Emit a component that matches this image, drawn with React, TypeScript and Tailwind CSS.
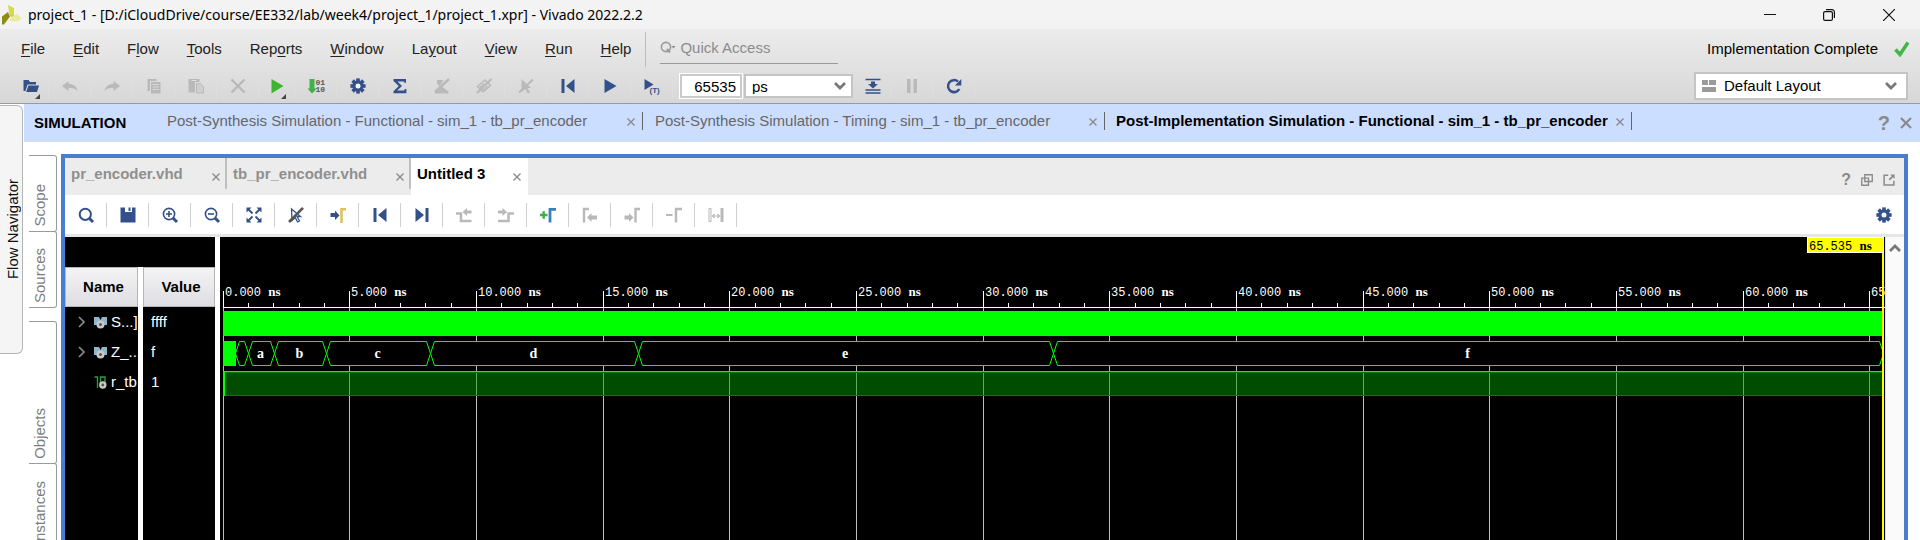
import React from "react";

const NAVY = "#33508a";
const GREY = "#b9b9b9";

type IconProps = { children: React.ReactNode; size?: "sm" | "md" };

function Icon({ children, size = "md" }: IconProps) {
  return (
    <svg
      viewBox="0 0 16 16"
      aria-hidden="true"
      className={size === "md" ? "h-4 w-4 shrink-0 overflow-visible" : "h-3 w-3 shrink-0 overflow-visible"}
    >
      {children}
    </svg>
  );
}

const Gear = () => (
  <Icon>
    {[0, 45, 90, 135].map((a) => (
      <rect key={a} x="6.2" y="0.4" width="3.6" height="15.2" fill={NAVY} transform={`rotate(${a} 8 8)`} />
    ))}
    <circle cx="8" cy="8" r="5.6" fill={NAVY} />
    <circle cx="8" cy="8" r="2.5" fill="#f4f4f4" />
  </Icon>
);

const Chevron = () => (
  <svg viewBox="0 0 14 10" aria-hidden="true" className="h-[10px] w-[14px]">
    <path d="M2 2l5 5 5-5" fill="none" stroke="#777" strokeWidth="2.8" />
  </svg>
);

const Cross = () => (
  <svg viewBox="0 0 8 8" aria-hidden="true" className="h-2 w-2">
    <path d="M.5.5l7 7M7.5.5l-7 7" stroke="#8a8a8a" strokeWidth="1.4" />
  </svg>
);

const Corner = () => (
  <svg viewBox="0 0 5 5" aria-hidden="true" className="absolute right-[8px] bottom-[-1px] h-[5px] w-[5px]">
    <path d="M5 0v5H0z" fill="#444" />
  </svg>
);

const toStart = (
  <Icon>
    <path d="M1.5 1h3v14h-3zM14.5 1v14L6 8z" fill={NAVY} />
  </Icon>
);

type Tool = { label: string; icon: React.ReactNode; narrow?: boolean; menu?: boolean };

const mainTools: Tool[] = [
  {
    label: "Open",
    narrow: true,
    menu: true,
    icon: (
      <Icon>
        <path d="M.5 2h5l1.5 2h6v2.4H4.6L2.4 13H.5z" fill={NAVY} />
        <path d="M5.4 7.6H16L14 14H3.2z" fill={NAVY} />
      </Icon>
    ),
  },
  {
    label: "Undo",
    icon: (
      <Icon>
        <path d="M0 8l6.5-5v3c5 0 8 2 9 7-2.500-2.600-5-3.200-9-3.200V13z" fill={GREY} />
      </Icon>
    ),
  },
  {
    label: "Redo",
    icon: (
      <Icon>
        <path d="M16 8L9.500 3v3C4.500 6 1.500 8 .5 13c2.500-2.600 5-3.200 9-3.200V13z" fill={GREY} />
      </Icon>
    ),
  },
  {
    label: "Copy",
    icon: (
      <Icon>
        <path d="M1.500 1h9v2H4v10H1.500z" fill={GREY} />
        <path d="M5 4h9.500v11.500H5z" fill={GREY} />
        <path d="M6.500 6.500h6.500M6.500 9h6.500M6.500 11.500h6.500" stroke="#d8d8d8" />
      </Icon>
    ),
  },
  {
    label: "Paste",
    icon: (
      <Icon>
        <path d="M.5 1h11v3H7v10.500H.5z" fill={GREY} />
        <path d="M3.500 2.500h5" stroke="#dedede" />
        <path d="M8.500 5.500h4l3 3v6.500h-7z" fill="#cfcfcf" stroke={GREY} />
      </Icon>
    ),
  },
  {
    label: "Delete",
    icon: (
      <Icon>
        <path d="M1.500 1.500l13 13M14.500 1.500l-13 13" stroke={GREY} strokeWidth="2.400" />
      </Icon>
    ),
  },
  {
    label: "Run",
    narrow: true,
    menu: true,
    icon: (
      <Icon>
        <path d="M2.500 1L14.500 8l-12 7.500z" fill="#3db52e" />
      </Icon>
    ),
  },
  {
    label: "Generate bitstream",
    icon: (
      <Icon>
        <path d="M1.500 1h5v9.500H9L4 15.500-.5 10.500h2z" fill="#43b04a" />
        <text x="7.500" y="7" fontSize="8" fontWeight="700" fontFamily="Liberation Mono, monospace" fill="#555">01</text>
        <text x="7.500" y="13.500" fontSize="8" fontWeight="700" fontFamily="Liberation Mono, monospace" fill="#555">10</text>
      </Icon>
    ),
  },
  { label: "Settings", icon: <Gear /> },
  {
    label: "Report summary",
    icon: (
      <Icon>
        <path d="M1.500 1h12.500v3.800h-1.800V3.400H5.500L10 8l-4.800 4.500h7.300v-1.600h1.900V15.300H1.500v-2.100L6.800 8 1.500 3z" fill={NAVY} />
      </Icon>
    ),
  },
  {
    label: "Toggle marks",
    icon: (
      <Icon>
        <path d="M3 2h6.500L5.500 8 3 6zM1 13.500l6-5.500 7.500 5.500V15.500H1z" fill={GREY} />
        <path d="M15 1L1 14" stroke={GREY} strokeWidth="2.600" />
      </Icon>
    ),
  },
  {
    label: "Toggle probes",
    icon: (
      <Icon>
        <path d="M9 2L1.500 8.500 7 14l7.500-6.500z" fill="none" stroke={GREY} strokeWidth="1.500" />
        <path d="M8.500 5.500L4.500 9 8 12l3.500-4" fill="none" stroke={GREY} strokeWidth="1.300" />
        <path d="M15.500 1L1 15" stroke={GREY} strokeWidth="2" />
      </Icon>
    ),
  },
  {
    label: "Clear selection",
    icon: (
      <Icon>
        <path d="M3.500 1l9.500 9H9.500l2.500 4.500-2.200 1-2.300-4.500-4 3z" fill={GREY} />
        <path d="M15 1.500L1 14.500" stroke={GREY} strokeWidth="2" />
      </Icon>
    ),
  },
  { label: "Restart", icon: toStart },
  {
    label: "Run all",
    icon: (
      <Icon>
        <path d="M2.500 1L14.500 8l-12 7z" fill={NAVY} />
      </Icon>
    ),
  },
  {
    label: "Run for time",
    icon: (
      <Icon>
        <path d="M.5 1L9.500 6.500.5 12z" fill={NAVY} />
        <text x="5.500" y="14.500" fontSize="8" fontWeight="700" fontFamily="Liberation Sans, sans-serif" fill={NAVY}>(T)</text>
      </Icon>
    ),
  },
];

const runTools: Tool[] = [
  {
    label: "Step",
    narrow: true,
    icon: (
      <Icon>
        <path d="M.5 1.500h15M.5 12h15M.5 15h15" stroke={NAVY} strokeWidth="1.500" />
        <path d="M6 3.500h4V6h3L8 10.500 3 6h3z" fill={NAVY} />
      </Icon>
    ),
  },
  {
    label: "Break",
    icon: (
      <Icon>
        <path d="M3 1h3.500v14H3zM9.500 1H13v14H9.500z" fill={GREY} />
      </Icon>
    ),
  },
  {
    label: "Relaunch",
    icon: (
      <Icon>
        <path d="M13.300 11A6 6 0 1 1 12 3.600" fill="none" stroke={NAVY} strokeWidth="2.500" />
        <path d="M15.300 1v6.500H9z" fill={NAVY} />
      </Icon>
    ),
  },
];

const lens = <path d="M11 11l4 4" stroke={NAVY} strokeWidth="3" />;

const waveTools: Tool[] = [
  {
    label: "Search",
    icon: (
      <Icon>
        <circle cx="7.300" cy="7.300" r="5.600" fill="none" stroke={NAVY} strokeWidth="2" />
        {lens}
      </Icon>
    ),
  },
  {
    label: "Save",
    icon: (
      <Icon>
        <path d="M.5.5H5V5h7V.5h3.500v15H.5z" fill={NAVY} />
        <path d="M8.500.5h2V4h-2z" fill={NAVY} />
      </Icon>
    ),
  },
  {
    label: "Zoom in",
    icon: (
      <Icon>
        <circle cx="7" cy="7" r="5.600" fill="none" stroke={NAVY} strokeWidth="1.600" />
        <path d="M4 7h6M7 4v6" stroke={NAVY} strokeWidth="1.600" />
        {lens}
      </Icon>
    ),
  },
  {
    label: "Zoom out",
    icon: (
      <Icon>
        <circle cx="7" cy="7" r="5.600" fill="none" stroke={NAVY} strokeWidth="1.600" />
        <path d="M4 7h6" stroke={NAVY} strokeWidth="1.600" />
        {lens}
      </Icon>
    ),
  },
  {
    label: "Zoom fit",
    icon: (
      <Icon>
        <path d="M.5 .5h5L.5 5.500zM15.500.5v5l-5-5zM.5 15.500v-5l5 5zM15.500 15.500h-5l5-5z" fill={NAVY} />
        <path d="M2 2l4.500 4.500M14 2L9.500 6.500M2 14l4.500-4.500M14 14L9.500 9.500" stroke={NAVY} strokeWidth="1.800" />
      </Icon>
    ),
  },
  {
    label: "Disable cursor snap",
    icon: (
      <Icon>
        <path d="M3.500 2l9 7.500H9l2.500 4.500-2 1-2.200-4.500-3.300 3z" fill="none" stroke={NAVY} strokeWidth="1.300" />
        <path d="M15 .8L1 15" stroke="#555" strokeWidth="2.600" />
      </Icon>
    ),
  },
  {
    label: "Go to cursor",
    icon: (
      <Icon>
        <path d="M.5 6H5V3.500L9.500 8.500 5 13v-3H.5z" fill={NAVY} />
        <path d="M11.500 16V2.300H16" fill="none" stroke="#dfc25c" strokeWidth="2.600" />
      </Icon>
    ),
  },
  { label: "Go to time 0", icon: toStart },
  {
    label: "Go to last time",
    icon: (
      <Icon>
        <path d="M11.500 1h3v14h-3zM1.500 1v14L10 8z" fill={NAVY} />
      </Icon>
    ),
  },
  {
    label: "Previous transition",
    icon: (
      <Icon>
        <path d="M0 6.500h5v7.500h10.500" fill="none" stroke={GREY} strokeWidth="2.500" />
        <path d="M6.500 5l4.500-4v2.500h4.500v3H11V9z" fill={GREY} />
      </Icon>
    ),
  },
  {
    label: "Next transition",
    icon: (
      <Icon>
        <path d="M0 14h10.500V6.500H16" fill="none" stroke={GREY} strokeWidth="2.500" />
        <path d="M9 5L4.500 1v2.500H0v3h4.500V9z" fill={GREY} />
      </Icon>
    ),
  },
  {
    label: "Add marker",
    icon: (
      <Icon>
        <path d="M0 8h7.500M3.700 4.300v7.400" stroke="#3fae49" strokeWidth="2.400" />
        <path d="M10 15.500V2.300h6" fill="none" stroke="#3b80b8" strokeWidth="2.800" />
      </Icon>
    ),
  },
  {
    label: "Previous marker",
    icon: (
      <Icon>
        <path d="M2 15.500V2h5" fill="none" stroke={GREY} strokeWidth="2.400" />
        <path d="M5 10.500L9.500 6v2.500h5.500v4H9.500V15z" fill={GREY} />
      </Icon>
    ),
  },
  {
    label: "Next marker",
    icon: (
      <Icon>
        <path d="M11.500 15.500V2H16" fill="none" stroke={GREY} strokeWidth="2.400" />
        <path d="M9.500 10.500L5 6v2.500H.5v4H5V15z" fill={GREY} />
      </Icon>
    ),
  },
  {
    label: "Delete marker",
    icon: (
      <Icon>
        <path d="M0 8h6.500" stroke={GREY} strokeWidth="2" />
        <path d="M10 15.500V2h6" fill="none" stroke={GREY} strokeWidth="2.400" />
      </Icon>
    ),
  },
  {
    label: "Swap cursors",
    icon: (
      <Icon>
        <path d="M1 1.500h2v13H1z" fill="none" stroke={GREY} />
        <path d="M12.500 1h3v14h-3z" fill={GREY} />
        <path d="M4.500 9h7M6.500 7l-2 2 2 2M9.500 7l2 2-2 2" fill="none" stroke={GREY} strokeWidth="1.200" />
      </Icon>
    ),
  },
];

function ToolButton({ tool, faint }: { tool: Tool; faint?: boolean }) {
  const width = tool.narrow ? "w-[36px]" : "w-[42px]";
  const line = faint ? "border-[#dedede]" : "border-[#cfcfcf]";
  return (
    <button
      type="button"
      aria-label={tool.label}
      className={`relative flex h-6 shrink-0 items-center justify-center border-r ${width} ${line}`}
    >
      {tool.icon}
      {tool.menu && <Corner />}
    </button>
  );
}

const menus: [string, string, string][] = [
  ["", "F", "ile"],
  ["", "E", "dit"],
  ["F", "l", "ow"],
  ["", "T", "ools"],
  ["Rep", "o", "rts"],
  ["", "W", "indow"],
  ["La", "y", "out"],
  ["", "V", "iew"],
  ["", "R", "un"],
  ["", "H", "elp"],
];

function TitleBar() {
  return (
    <header className="flex h-[29px] shrink-0 items-center bg-[#f3f3f3]">
      <svg viewBox="0 0 20 20" aria-hidden="true" className="ml-0.5 h-5 w-5">
        <path d="M6 0l6 3v7.500L7 7.500z" fill="#d3dc48" />
        <path d="M6 7l2 4.500L2 19.500H0v-8z" fill="#8e8d12" />
        <path d="M10 11l5-2 5 4.500-5 3-8-.5z" fill="#e9eb9c" />
        <path d="M7 7.500l5 3-3 1.500z" fill="#c3cc3a" />
      </svg>
      <h1 className="ml-1.5 font-['Noto_Sans','Open_Sans',sans-serif] text-[14px] text-black">
        project_1 - [D:/iCloudDrive/course/EE332/lab/week4/project_1/project_1.xpr] - Vivado 2022.2.2
      </h1>
      <div className="ml-auto flex h-full items-center">
        <button type="button" aria-label="Minimize" className="flex h-full w-[59px] items-center justify-center">
          <svg viewBox="0 0 12 12" className="h-3 w-3"><path d="M0 5.500h12" stroke="#111" /></svg>
        </button>
        <button type="button" aria-label="Restore" className="flex h-full w-[59px] items-center justify-center">
          <svg viewBox="0 0 12 12" className="h-3 w-3" fill="none" stroke="#111" strokeWidth="1.200">
            <rect x=".6" y="2.600" width="8.800" height="8.800" rx="1.500" />
            <path d="M3 .6h6a2.400 2.400 0 0 1 2.400 2.400v6" />
          </svg>
        </button>
        <button type="button" aria-label="Close" className="flex h-full w-[62px] items-center justify-center">
          <svg viewBox="0 0 12 12" className="h-3 w-3"><path d="M0 0l12 12M12 0L0 12" stroke="#111" strokeWidth="1.200" /></svg>
        </button>
      </div>
    </header>
  );
}

function MenuRow() {
  return (
    <div className="flex h-10 items-center">
      <nav aria-label="Main menu" className="flex gap-7 pl-[21px] text-[#222]">
        {menus.map(([a, b, c]) => (
          <button key={a + b + c} type="button">
            {a}
            <span className="underline underline-offset-2">{b}</span>
            {c}
          </button>
        ))}
      </nav>
      <div className="ml-3.5 h-[35px] w-px bg-[#bdbdbd]" />
      <div className="mt-0.5 ml-3.5 flex h-[33px] w-[178px] items-center gap-1 self-start border-b border-[#9a9a9a]">
        <svg viewBox="0 0 16 14" aria-hidden="true" className="h-[14px] w-4 shrink-0">
          <circle cx="6" cy="7" r="4.600" fill="none" stroke="#999" strokeWidth="1.600" />
          <path d="M7 9l3 3.500" stroke="#999" strokeWidth="2" />
          <path d="M11.500 6h4l-2 2.500z" fill="#888" />
        </svg>
        <input
          aria-label="Quick Access"
          placeholder="Quick Access"
          className="h-6 w-full min-w-0 bg-transparent outline-none placeholder:text-[#8c8c8c]"
        />
      </div>
      <span className="ml-auto text-black">Implementation Complete</span>
      <svg viewBox="0 0 16 16" aria-hidden="true" className="mr-[10px] ml-4 h-4 w-4">
        <path d="M1.500 8.500l4.500 5L14 1.500" fill="none" stroke="#41b649" strokeWidth="3.500" />
      </svg>
    </div>
  );
}

function MainToolbar() {
  return (
    <div className="flex h-[34px] items-center">
      <div className="flex pl-[13px]">
        {mainTools.map((t) => (
          <ToolButton key={t.label} tool={t} faint />
        ))}
      </div>
      <input
        aria-label="Run time"
        defaultValue="65535"
        className="ml-[7px] h-6 w-[62px] border-2 border-[#cbcbcb] bg-white pr-1 text-right text-[15px] text-black outline-1 outline-white"
      />
      <div className="relative ml-0.5 flex items-center">
        <select aria-label="Time unit" className="h-6 w-[109px] appearance-none border-2 border-[#c4c4c4] bg-white pl-1.5 text-[15px] leading-none text-black">
          <option>ps</option>
          <option>ns</option>
        </select>
        <span className="pointer-events-none absolute right-1.5"><Chevron /></span>
      </div>
      <div className="ml-0.5 flex">
        {runTools.map((t) => (
          <ToolButton key={t.label} tool={t} faint />
        ))}
      </div>
      <div className="relative mr-3 ml-auto flex items-center">
        <svg viewBox="0 0 14 12" aria-hidden="true" className="pointer-events-none absolute left-2 h-3 w-[14px]">
          <path d="M0 0h6v5H0zM7 0h7v5H7zM0 7h14v5H0z" fill="#9a9a9a" />
        </svg>
        <select aria-label="Window layout" className="h-7 w-[214px] appearance-none border-2 border-[#c4c4c4] bg-white pl-7 text-[15px] text-black">
          <option>Default Layout</option>
        </select>
        <span className="pointer-events-none absolute right-2.5"><Chevron /></span>
      </div>
    </div>
  );
}

const simTabs = [
  { title: "Post-Synthesis Simulation - Functional - sim_1 - tb_pr_encoder", cls: "w-[476px] pl-0" },
  { title: "Post-Synthesis Simulation - Timing - sim_1 - tb_pr_encoder", cls: "w-[462px] pl-3" },
  { title: "Post-Implementation Simulation - Functional - sim_1 - tb_pr_encoder", cls: "w-[527px] pl-[11px]", active: true },
];

function SimulationBar() {
  return (
    <div className="flex h-[38px] shrink-0 items-center bg-[#ccdeff]">
      <h2 className="w-[143px] shrink-0 pl-2.5 font-bold text-black">SIMULATION</h2>
      <div className="flex pb-1">
        {simTabs.map((t) => (
          <div key={t.title} className={`flex h-[18px] shrink-0 items-center justify-between border-r border-[#666] pr-[7px] whitespace-nowrap ${t.cls}`}>
            <button type="button" className={t.active ? "font-bold text-black" : "text-[#666]"}>{t.title}</button>
            <button type="button" aria-label={`Close ${t.title}`} className="pt-0.5"><Cross /></button>
          </div>
        ))}
      </div>
      <div className="mr-2 ml-auto flex items-center gap-2.5">
        <button type="button" aria-label="Help" className="text-xl leading-none font-bold text-[#8a8a8a]">?</button>
        <button type="button" aria-label="Close simulation">
          <svg viewBox="0 0 12 12" className="h-3 w-3"><path d="M1 1l10 10M11 1L1 11" stroke="#8a8a8a" strokeWidth="2.200" /></svg>
        </button>
      </div>
    </div>
  );
}

const sideTabs = [
  { name: "Scope", cls: "h-[77px]" },
  { name: "Sources", cls: "h-[77px]" },
  { name: "Objects", cls: "mt-3.5 h-[143px]" },
  { name: "Instances", cls: "h-[87px]" },
];

function SideTabs() {
  return (
    <div className="flex w-[28px] shrink-0 flex-col pt-[13px]">
      {sideTabs.map((t) => (
        <button
          key={t.name}
          type="button"
          className={`-mb-px flex shrink-0 flex-col items-center justify-end rounded-r-[3px] border-t border-r border-b border-[#9a9a9a] pr-1.5 pb-1 text-[#7d7d7d] ${t.cls}`}
        >
          <span className="rotate-180 leading-5 [writing-mode:vertical-rl]">{t.name}</span>
        </button>
      ))}
    </div>
  );
}

const fileTabs = [
  { name: "pr_encoder.vhd", cls: "w-[162px]" },
  { name: "tb_pr_encoder.vhd", cls: "w-[184px]" },
];

function FileTabs() {
  return (
    <div className="flex h-[37px] shrink-0 bg-[#ececec] font-bold">
      {fileTabs.map((t) => (
        <div key={t.name} className={`flex h-[31px] items-start justify-between border-r-2 border-[#bfbfbf] pt-1.5 pr-[5px] pl-1.5 text-[#8f8f8f] ${t.cls}`}>
          <button type="button">{t.name}</button>
          <button type="button" aria-label={`Close ${t.name}`} className="pt-[9px]"><Cross /></button>
        </div>
      ))}
      <div className="flex w-[117px] items-start justify-between bg-white pt-1.5 pr-[7px] pl-1.5 text-black">
        <button type="button">Untitled 3</button>
        <button type="button" aria-label="Close Untitled 3" className="pt-[9px]"><Cross /></button>
      </div>
      <div className="mr-[9px] ml-auto flex items-center gap-2.5 pt-1.5">
        <button type="button" aria-label="Help" className="text-base leading-none text-[#8a8a8a]">?</button>
        <button type="button" aria-label="Restore panel">
          <Icon size="sm">
            <path d="M5 1h10v9H5zM1 5.500h9v9.500H1z" fill="none" stroke="#8a8a8a" strokeWidth="1.800" />
          </Icon>
        </button>
        <button type="button" aria-label="Float panel">
          <Icon size="sm">
            <path d="M7 1.500H1.500v13h13V9" fill="none" stroke="#8a8a8a" strokeWidth="2" />
            <path d="M15.500.5v6l-2.200-2.200L9 8.500 7.500 7l4.200-4.300L9.500.5z" fill="#8a8a8a" />
          </Icon>
        </button>
      </div>
    </div>
  );
}

const BusIcon = () => (
  <svg viewBox="0 0 13 13" aria-hidden="true" className="h-[13px] w-[13px] shrink-0">
    <path d="M0 1h5l1.500 3L8 1h5v8H0z" fill="#8fb7cc" />
    <circle cx="6.500" cy="8.500" r="4" fill="#c9c9c9" />
    <circle cx="6.500" cy="8.500" r="1.500" fill="#555" />
  </svg>
);

const BitIcon = () => (
  <svg viewBox="0 0 13 13" aria-hidden="true" className="h-[13px] w-[13px] shrink-0">
    <path d="M.5 1h3v11M6.500 10V1H11v6" fill="none" stroke="#2f9a48" strokeWidth="1.400" />
    <circle cx="8.800" cy="9" r="3.700" fill="#c9c9c9" />
    <circle cx="8.800" cy="9" r="1.400" fill="#555" />
  </svg>
);

const signals = [
  { name: "S...]", value: "ffff", bus: true },
  { name: "Z_...", value: "f", bus: true },
  { name: "r_tb", value: "1", bus: false },
];

function SignalTable() {
  return (
    <div className="flex w-[150px] shrink-0 flex-col bg-black pt-[30px]">
      <table className="h-full w-full table-fixed border-separate border-spacing-0 text-white">
        <thead>
          <tr className="h-[40px] text-black">
            <th className="w-[78px] border-r-[5px] border-white p-0">
              <div className="flex h-[40px] items-center justify-center border border-[#b5b5b5] bg-linear-to-b from-[#f4f4f5] to-[#dedee3] pl-1">Name</div>
            </th>
            <th className="p-0">
              <div className="flex h-[40px] items-center justify-center border border-[#b5b5b5] bg-linear-to-b from-[#f4f4f5] to-[#dedee3] pl-1">Value</div>
            </th>
          </tr>
        </thead>
        <tbody>
          {signals.map((s) => (
            <tr key={s.name} className="h-[30px]">
              <td className="overflow-hidden border-r-[5px] border-white p-0">
                <div className="flex h-[30px] items-center pl-[13px] whitespace-nowrap">
                  <span className="w-4 shrink-0">
                    {s.bus && (
                      <svg viewBox="0 0 7 12" aria-hidden="true" className="h-3 w-[7px]">
                        <path d="M1 1l5 5-5 5" fill="none" stroke="#8a8a8a" strokeWidth="1.700" />
                      </svg>
                    )}
                  </span>
                  {s.bus ? <BusIcon /> : <BitIcon />}
                  <span className="pl-1">{s.name}</span>
                </div>
              </td>
              <td className="p-0 pl-2">{s.value}</td>
            </tr>
          ))}
          <tr>
            <td className="border-r-[5px] border-white p-0" />
            <td className="p-0" />
          </tr>
        </tbody>
      </table>
    </div>
  );
}

const X0 = 3;
const SCALE = 25.335;
const END = 1662;
const at = (ns: number) => Math.floor(X0 + ns * SCALE);

const busSegments = [
  { from: 0.512, to: 1.024, text: "" },
  { from: 1.024, to: 2.048, text: "a" },
  { from: 2.048, to: 4.096, text: "b" },
  { from: 4.096, to: 8.192, text: "c" },
  { from: 8.192, to: 16.384, text: "d" },
  { from: 16.384, to: 32.768, text: "e" },
  { from: 32.768, to: 65.535, text: "f" },
];

function TimeText({ x, y, value, fill }: { x: number; y: number; value: string; fill: string }) {
  return (
    <text x={x} y={y} fill={fill} xmlSpace="preserve">
      {`${value} `}
      <tspan className="font-['Liberation_Serif',serif] text-[13px] font-bold">ns</tspan>
    </text>
  );
}

function Waveform() {
  const majors = Array.from({ length: 14 }, (_, i) => i * 5);
  const minors = Array.from({ length: 66 }, (_, i) => i).filter((i) => i % 5 !== 0);
  return (
    <div className="relative min-w-0 flex-1 overflow-hidden bg-black">
      <svg
        role="img"
        aria-label="Waveform"
        className="absolute inset-0 h-full w-full font-['Liberation_Mono',monospace] text-[12px]"
      >
        {majors.map((t) => (
          <g key={t}>
            <rect x={at(t)} y="70" width="1" height="2000" fill="#bdbdbd" />
            <rect x={at(t)} y="54" width="1" height="16" fill="#fff" />
            <TimeText x={at(t) + 2} y={59} value={`${t}.000`} fill="#fff" />
          </g>
        ))}
        {minors.map((t) => (
          <rect key={t} x={at(t)} y="66" width="1" height="4" fill="#fff" />
        ))}
        <rect x="3" y="70" width="100%" height="1" fill="#fff" />
        <rect x="3" y="74" width={END - 3} height="25" fill="#00ff00" />
        <rect x="3" y="104" width={END - 3} height="25" fill="#000" />
        <rect x="3" y="104" width="13" height="25" fill="#00ff00" />
        {busSegments.map(({ from, to, text }) => {
          const a = at(from) + 0.5;
          const b = at(to) + 0.5;
          return (
            <g key={from}>
              <path
                d={`M${a} 116.5L${a + 4} 104.5H${b - 4}L${b} 116.5L${b - 4} 128.5H${a + 4}Z`}
                fill="none"
                stroke="#00ff00"
              />
              <text
                x={(a + b) / 2 - 1}
                y="121"
                textAnchor="middle"
                fill="#fff"
                className="font-['Liberation_Serif',serif] text-[14px] font-bold"
              >
                {text}
              </text>
            </g>
          );
        })}
        <rect x="3" y="134" width={END - 3} height="25" fill="#009900" fillOpacity="0.5" />
        <rect x="3" y="134" width={END - 3} height="1" fill="#00ff00" />
        <rect x="3" y="135" width={END - 3} height="1" fill="#008000" />
        <rect x="3" y="158" width={END - 3} height="1" fill="#008000" />
        <rect x="3" y="134" width="2" height="25" fill="#00ff00" />
        <rect x={END} y="15" width="2" height="2000" fill="#ffff00" />
        <rect x={END - 74.5} y="0.5" width="76" height="15" fill="#ffff00" stroke="#fff" />
        <TimeText x={END - 73} y={13} value="65.535" fill="#000" />
      </svg>
    </div>
  );
}

export default function App() {
  return (
    <div className="flex h-screen flex-col overflow-hidden bg-white font-['Liberation_Sans',Arial,sans-serif] text-[15px] leading-5">
      <TitleBar />
      <div className="shrink-0 border-b border-[#999] bg-linear-to-b from-[#ececec] to-[#d7d7d7]">
        <MenuRow />
        <MainToolbar />
      </div>
      <div className="flex min-h-0 flex-1">
        <div className="w-6 shrink-0 pt-px">
          <button
            type="button"
            className="flex h-[249px] w-[23px] items-center justify-center rounded-r-md border border-l-0 border-[#b5b5b5] bg-[#f5f5f5] pl-1 text-[#111]"
          >
            <span className="rotate-180 leading-5 [writing-mode:vertical-rl]">Flow Navigator</span>
          </button>
        </div>
        <div className="flex min-w-0 flex-1 flex-col">
          <SimulationBar />
          <div className="flex min-h-0 flex-1 pl-[5px]">
            <SideTabs />
            <main className="mt-3 mr-3 ml-1 flex min-w-0 flex-1 flex-col border-4 border-b-0 border-[#4a7dcd]">
              <FileTabs />
              <div className="flex h-[42px] shrink-0 items-center border-b-3 border-[#e6e6e6]">
                {waveTools.map((t) => (
                  <ToolButton key={t.label} tool={t} />
                ))}
                <button type="button" aria-label="Wave settings" className="mr-3 ml-auto"><Gear /></button>
              </div>
              <div className="flex min-h-0 flex-1 gap-[5px]">
                <SignalTable />
                <div className="flex min-w-0 flex-1">
                  <Waveform />
                  <div className="flex w-[19px] shrink-0 justify-center border-l border-[#e5dede] bg-[#fafafa] pt-1.5">
                    <button type="button" aria-label="Scroll up" className="h-[10px] rotate-180"><Chevron /></button>
                  </div>
                </div>
              </div>
            </main>
          </div>
        </div>
      </div>
    </div>
  );
}
